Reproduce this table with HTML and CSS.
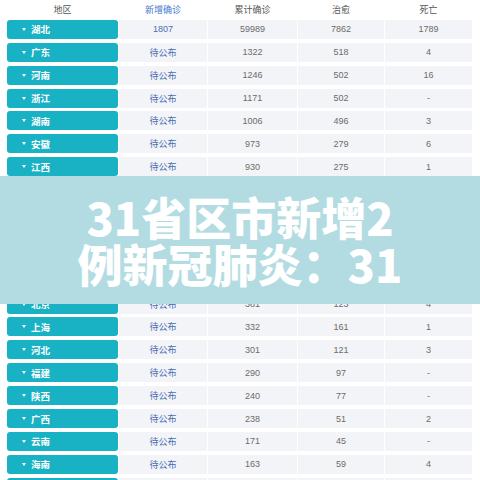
FILE: index.html
```html
<!DOCTYPE html>
<html lang="zh-CN">

<head>
    <meta charset="UTF-8">
    <meta name="viewport" content="width=device-width, initial-scale=1.0">
    <title>31省区市新增2例新冠肺炎</title>
    <link rel="stylesheet" href="styles.css">
</head>

<body>
    <div class="board">

        <div class="row head">
            <div>地区</div>
            <div class="hl">新增确诊</div>
            <div>累计确诊</div>
            <div>治愈</div>
            <div>死亡</div>
        </div>

        <div class="row"><div class="area">湖北</div><div class="new">1807</div><div>59989</div><div>7862</div><div>1789</div></div>
        <div class="row"><div class="area">广东</div><div class="new">待公布</div><div>1322</div><div>518</div><div>4</div></div>
        <div class="row"><div class="area">河南</div><div class="new">待公布</div><div>1246</div><div>502</div><div>16</div></div>
        <div class="row"><div class="area">浙江</div><div class="new">待公布</div><div>1171</div><div>502</div><div>-</div></div>
        <div class="row"><div class="area">湖南</div><div class="new">待公布</div><div>1006</div><div>496</div><div>3</div></div>
        <div class="row"><div class="area">安徽</div><div class="new">待公布</div><div>973</div><div>279</div><div>6</div></div>
        <div class="row"><div class="area">江西</div><div class="new">待公布</div><div>930</div><div>275</div><div>1</div></div>
        <!-- rows under the headline -->
        <div class="row hidden"><div class="area">江苏</div><div class="new">待公布</div><div>631</div><div>272</div><div>-</div></div>
        <div class="row hidden"><div class="area">重庆</div><div class="new">待公布</div><div>553</div><div>213</div><div>5</div></div>
        <div class="row hidden"><div class="area">山东</div><div class="new">待公布</div><div>541</div><div>188</div><div>2</div></div>
        <div class="row hidden"><div class="area">四川</div><div class="new">待公布</div><div>470</div><div>166</div><div>3</div></div>
        <div class="row hidden"><div class="area">黑龙江</div><div class="new">待公布</div><div>457</div><div>124</div><div>11</div></div>
        <div class="row"><div class="area">北京</div><div class="new">待公布</div><div>381</div><div>123</div><div>4</div></div>
        <div class="row"><div class="area">上海</div><div class="new">待公布</div><div>332</div><div>161</div><div>1</div></div>
        <div class="row"><div class="area">河北</div><div class="new">待公布</div><div>301</div><div>121</div><div>3</div></div>
        <div class="row"><div class="area">福建</div><div class="new">待公布</div><div>290</div><div>97</div><div>-</div></div>
        <div class="row"><div class="area">陕西</div><div class="new">待公布</div><div>240</div><div>77</div><div>-</div></div>
        <div class="row"><div class="area">广西</div><div class="new">待公布</div><div>238</div><div>51</div><div>2</div></div>
        <div class="row"><div class="area">云南</div><div class="new">待公布</div><div>171</div><div>45</div><div>-</div></div>
        <div class="row"><div class="area">海南</div><div class="new">待公布</div><div>163</div><div>59</div><div>4</div></div>
        <div class="row hidden"><div class="area">贵州</div><div class="new">待公布</div><div>146</div><div>36</div><div>1</div></div>

    </div>

    <!-- headline over the table -->
    <div class="banner">31省区市新增2<br>例新冠肺炎：31</div>
</body>

</html>
```

FILE: styles.css
```css
* {
    box-sizing: border-box;
}

html,
body {
    height: 100%;
}

body {
    margin: 0;
    overflow: hidden;
    background-color: #ffffff;
    font-family: "Liberation Sans", "Noto Sans CJK SC", sans-serif;
    font-size: 9px;
    color: #6b6b6b;
}

.board {
    display: flex;
    flex-direction: column;
    gap: 3.9px;
    padding-left: 7px;
}

.row {
    display: grid;
    grid-template-columns: 111px 88px 89px 86px 87px;
    column-gap: 1px;
    height: 19px;
    flex-shrink: 0;
}

.row div {
    display: flex;
    align-items: center;
    justify-content: center;
    background-color: #f3f4f7;
}

/* covered by the banner or cut by the edge, text not shown */
.hidden div {
    color: transparent;
}

.hidden .area::before {
    border-top-color: transparent;
}

.head {
    height: 16px;
}

.head div {
    background-color: transparent;
    color: #555555;
    padding-top: 2px;
}

.head .hl {
    color: #3f78d0;
}

.row .area {
    justify-content: flex-start;
    padding-left: 15px;
    background-color: #19b2c4;
    border-radius: 3px;
    color: #ffffff;
    font-weight: bold;
    font-size: 9.5px;
}

.area::before {
    content: "";
    border-left: 2.5px solid transparent;
    border-right: 2.5px solid transparent;
    border-top: 3px solid #ffffff;
    margin-right: 5px;
}

.new {
    color: #4a6db4;
}

.banner {
    position: absolute;
    left: 0;
    right: 0;
    top: 176px;
    height: 128px;
    padding-top: 17px;
    background-color: #b3dce2;
    color: #ffffff;
    font-family: "Noto Sans CJK SC", sans-serif;
    font-weight: 900;
    font-size: 45px;
    line-height: 47px;
    text-align: center;
}
```
